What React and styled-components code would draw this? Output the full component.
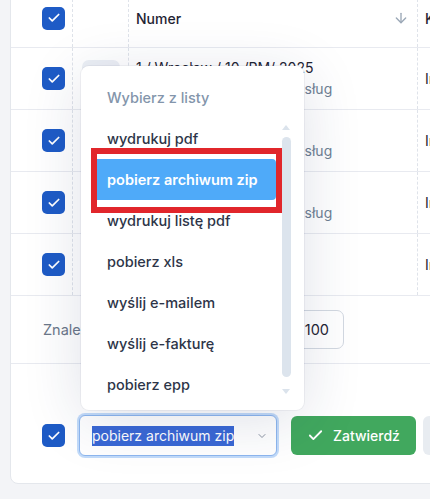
import React from "react"
import styled, { createGlobalStyle } from "styled-components"
import { Check, ArrowDown, ChevronDown } from "lucide-react"

const GlobalStyle = createGlobalStyle`
  * { box-sizing: border-box; }
  html, body { margin: 0; padding: 0; }
  body {
    background: #f3f4f7;
    font-family: Inter, "Noto Sans", sans-serif;
    color: #1f2937;
    overflow: hidden;
  }
`

const rows = [
  { numer: "1 / Wrocław / 10 /PM/ 2025", opis: "Sprzedaż towarów oraz usług", klient: "Inter Cars" },
  { numer: "2 / Wrocław / 9 /PM/ 25", opis: "Sprzedaż towarów oraz usług", klient: "Inter Cars" },
  { numer: "3 / Wrocław / 8 /PM/ 25", opis: "Sprzedaż towarów oraz usług", klient: "Inter Cars" },
  { numer: "4 / Wrocław / 7 /PM/ 25", opis: "", klient: "Inter Cars" },
]

const options = [
  "wydrukuj pdf",
  "pobierz archiwum zip",
  "wydrukuj listę pdf",
  "pobierz xls",
  "wyślij e-mailem",
  "wyślij e-fakturę",
  "pobierz epp",
]

function Box() {
  return (
    <CheckBox>
      <Check size={14} strokeWidth={3} color="#fff" />
    </CheckBox>
  )
}

function App() {
  return (
    <Page>
      <GlobalStyle />
      <Card>
        <HeaderRow>
          <Cell first>
            <Box />
          </Cell>
          <Cell />
          <Cell>
            <HeadTitle>Numer</HeadTitle>
            <SortIcon>
              <ArrowDown size={16} strokeWidth={2} />
            </SortIcon>
          </Cell>
          <Cell last>
            <HeadTitle>Kontrahent</HeadTitle>
          </Cell>
        </HeaderRow>
        {rows.map((r, i) => (
          <Row key={i}>
            <Cell first>
              <Box />
            </Cell>
            <Cell center>{i === 0 && <IconButton />}</Cell>
            <Cell column>
              <Numer>{r.numer}</Numer>
              {r.opis && <Opis>{r.opis}</Opis>}
            </Cell>
            <Cell last>
              <Klient>{r.klient}</Klient>
            </Cell>
          </Row>
        ))}
        <InfoRow>
          <InfoContent>
            <Found>Znaleziono 4 pozycje</Found>
            <PerPage>100</PerPage>
          </InfoContent>
        </InfoRow>
        <ActionRow>
          <Box />
          <Select>
            <Selected>pobierz archiwum zip</Selected>
            <ChevronDown size={12} color="#8a94a3" />
          </Select>
          <ConfirmButton>
            <Check size={17} strokeWidth={2.6} />
            Zatwierdź
          </ConfirmButton>
          <GhostButton>Anuluj</GhostButton>
        </ActionRow>
      </Card>

      <Dropdown>
        <Placeholder>Wybierz z listy</Placeholder>
        {options.map((o) => (
          <Option key={o} active={o === "pobierz archiwum zip"}>
            {o}
            {o === "pobierz archiwum zip" && <Marker />}
          </Option>
        ))}
        <ScrollUp />
        <ScrollThumb />
        <ScrollDown />
      </Dropdown>
    </Page>
  )
}

export default App

const Page = styled.div`
  position: relative;
  width: 430px;
  height: 499px;
  padding-left: 10px;
  overflow: hidden;
`
const Card = styled.div`
  margin-top: -12px;
  width: 640px;
  background: #fff;
  border: 1px solid #e4e7ec;
  border-radius: 8px;
`
const gridCols = `
  display: grid;
  grid-template-columns: 62px 56px 289px 1fr;
`
const HeaderRow = styled.div`
  ${gridCols}
  height: 59px;
  border-bottom: 1px solid #e8eaf0;
`
const Row = styled.div`
  ${gridCols}
  height: 62px;
  border-bottom: 1px solid #e8eaf0;
`
const Cell = styled.div`
  display: flex;
  flex-direction: ${(p) => (p.column ? "column" : "row")};
  justify-content: ${(p) => (p.column ? "center" : p.center ? "center" : "flex-start")};
  align-items: ${(p) => (p.column ? "flex-start" : "center")};
  padding-left: ${(p) => (p.first ? "31px" : p.center ? "0" : "7px")};
  border-right: ${(p) => (p.last ? "none" : "1px dashed #dfe3ea")};
  position: relative;
`
const CheckBox = styled.span`
  width: 23px;
  height: 23px;
  border-radius: 5px;
  background: #1e5bc6;
  display: inline-flex;
  align-items: center;
  justify-content: center;
  flex-shrink: 0;
`
const HeadTitle = styled.span`
  font-size: 14px;
  font-weight: 500;
  color: #1f2433;
  white-space: nowrap;
`
const SortIcon = styled.span`
  margin-left: auto;
  margin-right: 8px;
  display: flex;
  color: #9aa7b6;
`
const IconButton = styled.span`
  width: 38px;
  height: 38px;
  border-radius: 7px;
  background: #eceff5;
`
const Numer = styled.span`
  font-size: 14px;
  color: #1f2433;
  white-space: nowrap;
  line-height: 20px;
`
const Opis = styled.span`
  font-size: 14px;
  color: #6f7f93;
  white-space: nowrap;
  line-height: 20px;
  margin-top: 1px;
`
const Klient = styled.span`
  font-size: 14px;
  color: #1f2433;
  white-space: nowrap;
`
const InfoRow = styled.div`
  height: 68px;
  border-bottom: 1px solid #e8eaf0;
`
const InfoContent = styled.div`
  display: flex;
  align-items: center;
  justify-content: space-between;
  width: 333px;
  height: 100%;
  padding-left: 32px;
`
const Found = styled.span`
  font-size: 14.5px;
  color: #6b7789;
`
const PerPage = styled.span`
  display: flex;
  align-items: center;
  justify-content: flex-end;
  width: 60px;
  height: 39px;
  padding-right: 14px;
  border: 1px solid #d3d9e1;
  border-radius: 7px;
  font-size: 14.5px;
  color: #1f2433;
`
const ActionRow = styled.div`
  display: flex;
  align-items: center;
  padding: 51px 0 27px 31px;
`
const Select = styled.div`
  margin-left: 14px;
  width: 198px;
  height: 41px;
  display: flex;
  align-items: center;
  justify-content: space-between;
  padding: 0 8px 0 12px;
  border: 1px solid #8db6ee;
  border-radius: 6px;
  box-shadow: 0 0 0 2px rgba(120, 175, 245, 0.45);
  background: #fff;
`
const Selected = styled.span`
  background: #3a68d5;
  color: #fff;
  font-size: 14px;
  font-weight: 400;
  line-height: 20px;
  white-space: nowrap;
`
const ConfirmButton = styled.button`
  margin-left: 14px;
  width: 125px;
  height: 39px;
  border: none;
  border-radius: 6px;
  background: #41a85e;
  color: #fff;
  font-family: inherit;
  font-size: 14px;
  font-weight: 500;
  display: flex;
  align-items: center;
  justify-content: center;
  gap: 9px;
`
const GhostButton = styled.button`
  margin-left: 7px;
  width: 100px;
  height: 39px;
  border: none;
  border-radius: 6px;
  background: #e8ecf1;
  color: #1f2433;
  font-family: inherit;
  font-size: 14px;
`
const Dropdown = styled.div`
  position: absolute;
  left: 81px;
  top: 66px;
  width: 223px;
  height: 344px;
  padding-top: 11px;
  background: #fff;
  border-radius: 8px;
  box-shadow: 0 0 0 1px rgba(30, 40, 70, 0.05), 0 10px 60px rgba(30, 40, 90, 0.14);
`
const Placeholder = styled.div`
  height: 41px;
  display: flex;
  align-items: center;
  padding-left: 26px;
  font-size: 14.5px;
  font-weight: 500;
  color: #8395ab;
`
const Option = styled.div`
  position: relative;
  height: 41px;
  margin: 0 28px 0 16px;
  display: flex;
  align-items: center;
  padding-left: 10px;
  font-size: 14.5px;
  font-weight: ${(p) => (p.active ? 600 : 500)};
  color: ${(p) => (p.active ? "#fff" : "#2d3548")};
  background: ${(p) => (p.active ? "#4faaf9" : "transparent")};
  border-radius: ${(p) => (p.active ? "0 4px 4px 0" : "0")};
  white-space: nowrap;
`
const Marker = styled.span`
  position: absolute;
  left: -6px;
  right: -6px;
  top: -11px;
  bottom: -13px;
  border: 6px solid #e1262b;
  pointer-events: none;
`
const ScrollThumb = styled.span`
  position: absolute;
  left: 201px;
  top: 71px;
  width: 9px;
  height: 240px;
  border-radius: 5px;
  background: #dce4ed;
`
const ScrollUp = styled.span`
  position: absolute;
  left: 201px;
  top: 59px;
  width: 0;
  height: 0;
  border-left: 4.5px solid transparent;
  border-right: 4.5px solid transparent;
  border-bottom: 5px solid #dbe3ec;
`
const ScrollDown = styled.span`
  position: absolute;
  left: 201px;
  top: 323px;
  width: 0;
  height: 0;
  border-left: 4.5px solid transparent;
  border-right: 4.5px solid transparent;
  border-top: 5px solid #dbe3ec;
`
